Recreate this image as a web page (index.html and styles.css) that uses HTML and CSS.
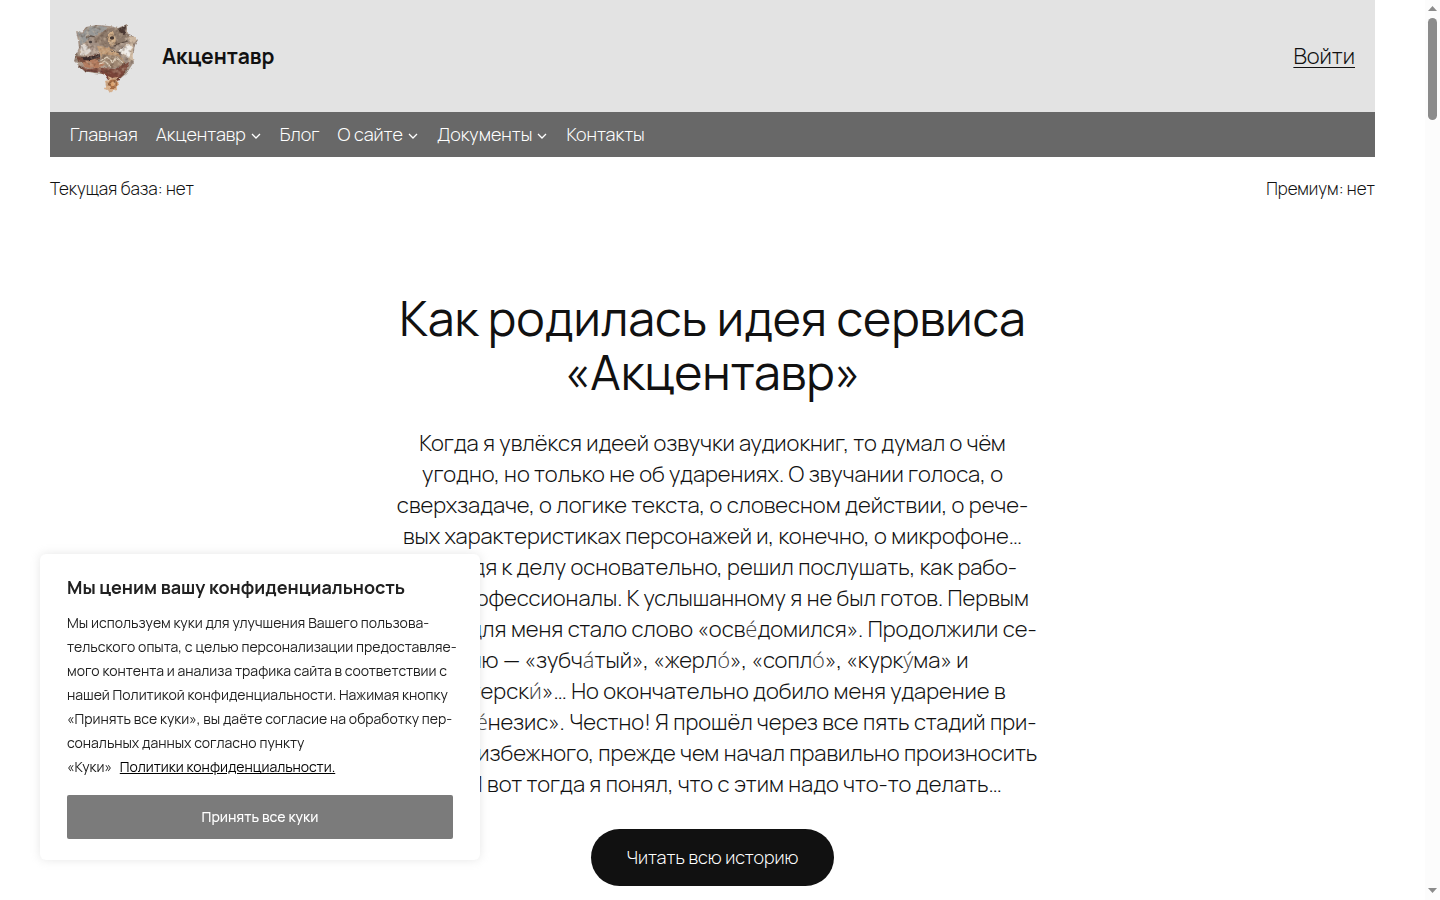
FILE: index.html
```html
<!DOCTYPE html>
<html lang="ru">
<head>
<meta charset="utf-8">
<meta name="viewport" content="width=device-width, initial-scale=1">
<title>Акцентавр</title>
<link rel="stylesheet" href="styles.css">
</head>
<body>
<div class="page">
  <header class="site-header">
    <a class="brand" href="#">
      <svg class="logo" viewBox="0 0 80 84" aria-hidden="true">
        <defs>
          <filter id="fur" x="0" y="0" width="100%" height="100%" color-interpolation-filters="sRGB">
            <feTurbulence type="fractalNoise" baseFrequency=".25" numOctaves="3" seed="7" result="n"/>
            <feDisplacementMap in="SourceGraphic" in2="n" scale="3" xChannelSelector="R" yChannelSelector="G" result="g"/>
            <feColorMatrix in="n" type="matrix" values="0 0 0 0 .3  0 0 0 0 .22  0 0 0 0 .17  1.4 0 0 0 -.68" result="d"/>
            <feComposite in="d" in2="g" operator="in" result="dark"/>
            <feColorMatrix in="n" type="matrix" values="0 0 0 0 .88  0 0 0 0 .8  0 0 0 0 .7  0 1.1 0 0 -.5" result="l"/>
            <feComposite in="l" in2="g" operator="in" result="light"/>
            <feMerge><feMergeNode in="g"/><feMergeNode in="dark"/><feMergeNode in="light"/></feMerge>
            <feGaussianBlur stdDeviation=".6"/>
          </filter>
        </defs>
        <g filter="url(#fur)">
          <path fill="#a08f83" d="M10 17 15 19 20 13 31 11 43 12 52 14 61 10 61 19 67 22 72 26 69 31 68 37 66 42 68 48 64 54 60 60 55 64 52 61 45 62 37 60 28 59 18 57 12 51 8 47 10 40 13 34 12 26Z"/>
          <path fill="#969796" d="M11 17 16 20 22 13 35 12 42 14 33 20 23 24 15 33Z"/>
          <path fill="#8d7a6b" d="M33 20 43 14 57 15 60 19 59 27 48 33 34 31 28 25Z"/>
          <path fill="#d2b08b" d="M42 19 47 17 50 27 46 33 42 28Z"/>
          <path fill="#dac3aa" d="m61 21 8 2 2 3-4 4v16l-4 2-5-16 6-4Z" opacity=".75"/>
          <path fill="#b3a094" d="M16 30Q22 25 28 34L35 39 24 43 15 42 12 37Z"/>
          <path fill="#ded8d3" d="M15 31Q21 29 25 37 20 43 14 41Z"/>
          <path fill="#c09a75" d="m31 32 12 1 9 6 7 10-10 4-12-5Z"/>
          <path fill="#9f8873" d="m36 40 17 2 6 9-12 3-13-4Z"/>
          <path fill="#f0ede9" d="m53 36 10-6 3 4-3 10-9-5Z"/>
          <path fill="#764c3d" d="M10 42 18 43 29 41 34 39 34 45 25 48 18 50 12 47Z"/>
          <path fill="#392a2b" d="M15 43 29 42 34 39 34 43 25 46 18 46Z"/>
          <path fill="#b37b5e" d="m17 48 12-3 10 5-7 6-14-3Z"/>
          <path fill="#7d4c3f" d="M12 51 21 55 30 54 39 54 49 55 63 47 60 57 55 62 51 60 44 63 34 59 19 57Z"/>
          <path fill="#63393a" d="m20 56 14 1 13 1-3 3-9-3-14-1Z"/>
          <path fill="#493833" d="m52 15 8-4-1 10-4-3Z"/>
          <path fill="none" stroke="#594a40" stroke-width="1.200" d="m20 24 5-2 4 1m19 8 14-4m-7 12-11-2"/>
          <path fill="none" stroke="#ded0bd" stroke-width="1.200" d="m34 47 7-4 6 5 3-5 7 6m-24 1 7-2 5 5"/>
          <path fill="#7a4439" d="m36 57 20 0 2 3-6 7-10-1Z"/>
        </g>
        <ellipse cx="46" cy="24" rx="2.200" ry="1.700" fill="#352a28" opacity=".9"/>
        <ellipse cx="24.500" cy="28" rx="1.600" ry="1.200" fill="#362f2e" opacity=".85"/>
        <g filter="url(#fur)">
          <path fill="#d9b08b" d="m42 62 4 2 6-1-1 4 3 3-3 2v4l-4 1-3 2-2-3-4-1 2-4-1-4 4-1Z"/>
          <circle cx="47" cy="70" r="4.500" fill="#a66a40"/>
          <circle cx="47" cy="70" r="2.300" fill="#dca16b"/>
        </g>
      </svg>
      <span class="brand-name">Акцентавр</span>
    </a>
    <a class="login" href="#">Войти</a>
  </header>
  <nav class="menu" aria-label="Основное меню">
    <a href="#">Главная</a>
    <a href="#">Акцентавр<svg class="chevron" viewBox="0 0 12 12" aria-hidden="true"><path d="m2 5 4 4 4-4"/></svg></a>
    <a href="#">Блог</a>
    <a href="#">О сайте<svg class="chevron" viewBox="0 0 12 12" aria-hidden="true"><path d="m2 5 4 4 4-4"/></svg></a>
    <a href="#">Документы<svg class="chevron" viewBox="0 0 12 12" aria-hidden="true"><path d="m2 5 4 4 4-4"/></svg></a>
    <a href="#">Контакты</a>
  </nav>
  <div class="status"><span>Текущая база: нет</span><span>Премиум: нет</span></div>
  <main class="story">
    <h1>Как родилась идея сервиса «Акцентавр»</h1>
    <p>Когда я увлёкся идеей озвучки аудиокниг, то думал о чём<br>
    угодно, но только не об ударениях. О звучании голоса, о<br>
    сверхзадаче, о логике текста, о словесном действии, о рече-<br>
    вых характеристиках персонажей и, конечно, о микрофоне…<br>
    Подходя к делу основательно, решил послушать, как рабо-<br>
    тают профессионалы. К услышанному я не был готов. Первым<br>
    ударом для меня стало слово «осв<span class="stress">е́</span>домился». Продолжили се-<br>
    рию — «зубч<span class="stress">а́</span>тый», «жерл<span class="stress">о́</span>», «сопл<span class="stress">о́</span>», «курк<span class="stress">у́</span>ма» и<br>
    «мастерск<span class="stress">и́</span>»… Но окончательно добило меня ударение в<br>
    слове «г<span class="stress">е́</span>незис». Честно! Я прошёл через все пять стадий при-<br>
    нятия неизбежного, прежде чем начал правильно произносить<br>
    его. И вот тогда я понял, что с этим надо что-то делать…</p>
    <a class="read-more" href="#">Читать всю историю</a>
  </main>
</div>

<section class="consent" aria-labelledby="consent-title">
  <h2 id="consent-title">Мы ценим вашу конфиденциальность</h2>
  <p>Мы используем куки для улучшения Вашего пользова-<br>
  тельского опыта, с целью персонализации предоставляе-<br>
  мого контента и анализа трафика сайта в соответствии с<br>
  нашей Политикой конфиденциальности. Нажимая кнопку<br>
  «Принять все куки», вы даёте согласие на обработку пер-<br>
  сональных данных согласно пункту<br>
  «Куки» <a href="#">Политики конфиденциальности.</a></p>
  <button type="button">Принять все куки</button>
</section>

<div class="scrollbar" aria-hidden="true">
  <svg viewBox="0 0 15 15"><path d="M3 11 7.500 6 12 11Z"/></svg>
  <div class="track"><div class="thumb"></div></div>
  <svg viewBox="0 0 15 15"><path d="M3 3 7.500 8 12 3Z"/></svg>
</div>
</body>
</html>
```
FILE: styles.css
```css
* { box-sizing: border-box; }

body {
  margin: 0;
  height: 100vh;
  overflow: hidden;
  background: #fff;
  color: #111;
  font-family: Manrope, Inter, "Open Sans", sans-serif;
  font-size: 18px;
  font-weight: 300;
  line-height: 29px;
}

a { color: inherit; }

.page { padding: 0 65px 0 50px; }

.site-header {
  display: flex;
  align-items: center;
  justify-content: space-between;
  padding: 14px 20px;
  background: #e3e3e3;
}

.brand {
  display: flex;
  align-items: center;
  gap: 16px;
  text-decoration: none;
}

.logo { width: 80px; height: 84px; margin-left: -4px; }

.brand-name { font-size: 21px; font-weight: 700; }

.login {
  font-size: 22px;
  text-decoration-thickness: 1px;
  text-underline-offset: 3px;
}

.menu {
  display: flex;
  gap: 18px;
  padding: 8px 20px;
  background: #686868;
  color: #fff;
}

.menu a {
  display: flex;
  align-items: center;
  gap: 4px;
  text-decoration: none;
}

.chevron { width: 12px; height: 12px; }

.chevron path {
  fill: none;
  stroke: currentColor;
  stroke-width: 1.3;
}

.status {
  display: flex;
  justify-content: space-between;
  padding-top: 17px;
  font-size: 17px;
}

.story {
  display: flex;
  flex-direction: column;
  align-items: center;
  max-width: 650px;
  margin: 88px auto 0;
  text-align: center;
}

h1 {
  margin: 0;
  font-size: 48px;
  font-weight: 400;
  line-height: 54px;
}

.story p {
  margin: 29px 0;
  font-size: 22px;
  line-height: 31px;
  white-space: nowrap;
}

.stress { color: #444; font-family: "Open Sans", sans-serif; line-height: 1; }

.read-more {
  padding: 14px 36px;
  border-radius: 29px;
  background: #111;
  color: #fff;
  text-decoration: none;
}

.consent {
  position: fixed;
  left: 40px;
  bottom: 40px;
  width: 440px;
  padding: 21px 27px;
  border-radius: 6px;
  background: #fff;
  box-shadow: 0 0 10px rgba(172, 171, 171, .3);
  color: #212121;
  font-size: 14px;
  font-weight: 400;
  line-height: 24px;
}

.consent h2 {
  margin: 0 0 12px;
  font-size: 18px;
  font-weight: 700;
  line-height: 24px;
}

.consent p { margin: 0 0 16px; white-space: nowrap; }

.consent p a { margin-left: 5px; color: #000; }

.consent button {
  width: 100%;
  padding: 10px;
  border: 0;
  border-radius: 2px;
  background: #7b7b7b;
  color: #fff;
  font: inherit;
  font-weight: 500;
}

.scrollbar {
  position: fixed;
  top: 0;
  right: 0;
  bottom: 0;
  display: flex;
  flex-direction: column;
  width: 15px;
  background: #fcfcfc;
}

.scrollbar svg { width: 15px; height: 15px; fill: #8b8b8b; }

.track { flex: 1; padding: 3px 3px 0; }

.thumb {
  height: 102px;
  border-radius: 5px;
  background: #8b8b8b;
}
```
